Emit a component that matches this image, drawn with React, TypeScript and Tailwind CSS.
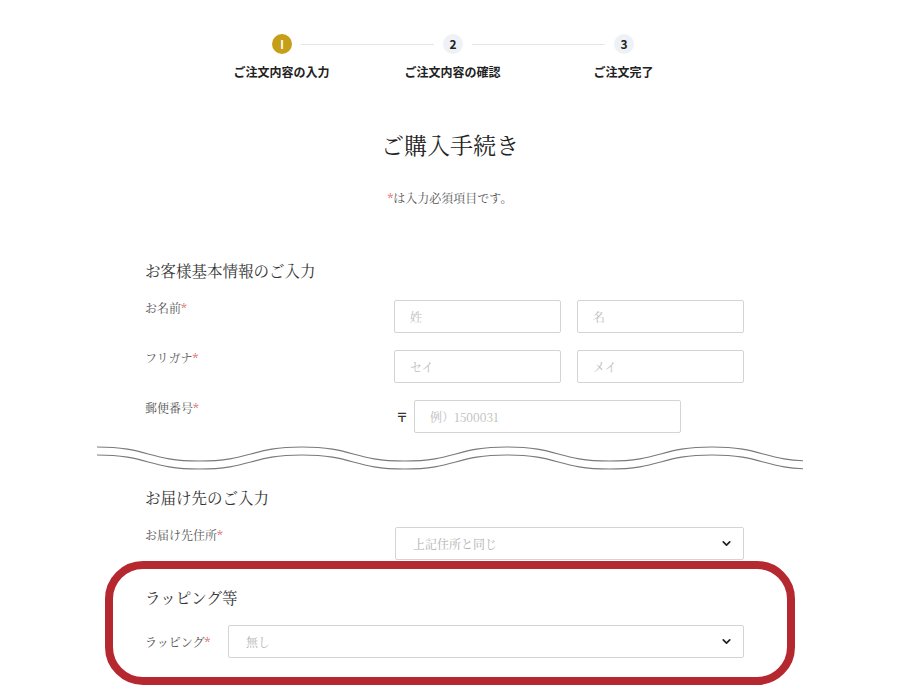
import React from "react";
import { ChevronDown } from "lucide-react";

const serif = "font-['Noto_Serif_CJK_JP','Noto_Sans_CJK_JP','Liberation_Serif',serif]";
const sans = "font-['Noto_Sans_CJK_JP','Noto_Sans',sans-serif]";

function Req() {
  return <span className="text-[#d9534f]">*</span>;
}

function Input({ ph, w }: { ph: string; w: string }) {
  return (
    <div className={`${w} h-[33px] border border-[#d4d4d4] rounded-[2px] flex items-center pl-[15px] text-[12px] text-[#bdbdbd] ${serif}`}>
      {ph}
    </div>
  );
}

function Select({ value, w }: { value: string; w: string }) {
  return (
    <div className={`${w} h-[33px] border border-[#d4d4d4] rounded-[2px] flex items-center justify-between pl-[17px] pr-[10px] text-[12px] text-[#b0b0b0] ${serif}`}>
      <span>{value}</span>
      <ChevronDown size={13} strokeWidth={3.2} className="text-[#222]" />
    </div>
  );
}

function Wave() {
  const mk = (y0: number) => {
    const p = 205;
    const a = 7;
    let d = `M0 ${y0}`;
    let x = 0;
    let up = true;
    for (let i = 0; i < 8; i++) {
      const nx = x + p / 2;
      const ny = up ? y0 + 2 * a : y0;
      const cy1 = up ? y0 : y0 + 2 * a;
      d += ` C${x + p / 4} ${cy1} ${nx - p / 4} ${ny} ${nx} ${ny}`;
      x = nx;
      up = !up;
    }
    return d;
  };
  return (
    <svg width="706" height="32" viewBox="0 0 706 32" className="block">
      <path d={mk(6)} fill="none" stroke="#7a7a7a" strokeWidth="1.2" />
      <path d={mk(14)} fill="none" stroke="#7a7a7a" strokeWidth="1.2" />
    </svg>
  );
}

export default function App() {
  return (
    <div className="w-[900px] h-[700px] bg-white overflow-hidden text-[#333]">
      {/* Steps */}
      <div className="pt-[34px]">
        <div className="ml-[272px] w-[362px] flex items-center">
          <div className={`w-[20px] h-[20px] rounded-full bg-[#c59f17] flex items-center justify-center text-white text-[11px] font-bold ${sans}`}>I</div>
          <div className="flex-1 h-px bg-[#e3e6ea] mx-[9px]" />
          <div className={`w-[20px] h-[20px] rounded-full bg-[#eef2f6] flex items-center justify-center text-[#222] text-[12px] font-bold ${sans}`}>2</div>
          <div className="flex-1 h-px bg-[#e3e6ea] mx-[9px]" />
          <div className={`w-[20px] h-[20px] rounded-full bg-[#eef2f6] flex items-center justify-center text-[#222] text-[12px] font-bold ${sans}`}>3</div>
        </div>
        <div className={`ml-[196px] flex mt-[9px] text-[12px] font-bold text-[#222] leading-[18px] ${sans}`}>
          <div className="w-[171px] text-center">ご注文内容の入力</div>
          <div className="w-[171px] text-center">ご注文内容の確認</div>
          <div className="w-[171px] text-center">ご注文完了</div>
        </div>
      </div>

      <h1 className={`text-center text-[23px] leading-[30px] mt-[49px] text-[#222] ${serif}`}>ご購入手続き</h1>
      <p className={`text-center text-[12px] leading-[16px] mt-[30px] text-[#555] ${serif}`}>
        <Req />は入力必須項目です。
      </p>

      <div className="ml-[145px] w-[599px] mt-[53px]">
        <h2 className={`text-[15.5px] leading-[22px] text-[#333] ${serif}`}>お客様基本情報のご入力</h2>
        <div className="mt-[19px] flex flex-col gap-[17px]">
          <div className="flex">
            <div className={`w-[250px] text-[12px] leading-[16px] text-[#555] ${serif}`}>お名前<Req /></div>
            <div className="flex gap-[16px]">
              <Input ph="姓" w="w-[167px]" />
              <Input ph="名" w="w-[167px]" />
            </div>
          </div>
          <div className="flex">
            <div className={`w-[250px] text-[12px] leading-[16px] text-[#555] ${serif}`}>フリガナ<Req /></div>
            <div className="flex gap-[16px]">
              <Input ph="セイ" w="w-[167px]" />
              <Input ph="メイ" w="w-[167px]" />
            </div>
          </div>
          <div className="flex">
            <div className={`w-[250px] text-[12px] leading-[16px] text-[#555] ${serif}`}>郵便番号<Req /></div>
            <div className="flex items-center">
              <span className={`w-[19px] pl-[1px] text-[12px] font-bold text-[#333] ${sans}`}>〒</span>
              <Input ph="例）1500031" w="w-[267px]" />
            </div>
          </div>
        </div>
      </div>

      <div className="ml-[97px] mt-[8px]">
        <Wave />
      </div>

      <div className="ml-[145px] w-[599px] mt-[13px]">
        <h2 className={`text-[15.5px] leading-[22px] text-[#333] ${serif}`}>お届け先のご入力</h2>
        <div className="mt-[19px] flex">
          <div className={`w-[250px] text-[12px] leading-[16px] text-[#555] ${serif}`}>お届け先住所<Req /></div>
          <Select value="上記住所と同じ" w="w-[349px]" />
        </div>
      </div>

      <div className="ml-[105px] w-[690px] h-[124px] mt-[1px] border-[8px] border-[#b5282f] rounded-[38px] pl-[32px] pr-[43px] pt-[17px]">
        <h2 className={`text-[15.5px] leading-[22px] text-[#333] ${serif}`}>ラッピング等</h2>
        <div className="mt-[17px] flex items-center">
          <div className={`w-[83px] text-[12px] leading-[16px] text-[#555] ${serif}`}>ラッピング<Req /></div>
          <Select value="無し" w="w-[516px]" />
        </div>
      </div>
    </div>
  );
}
